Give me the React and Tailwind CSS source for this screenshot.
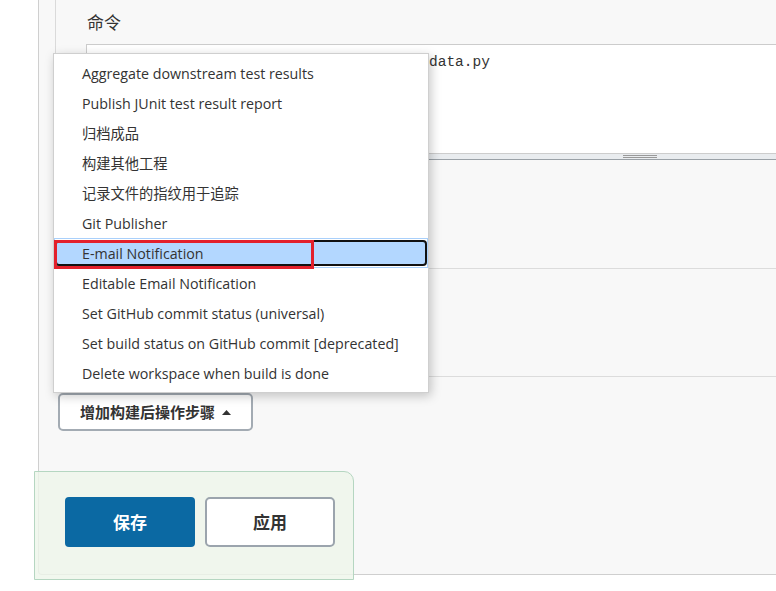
import React from 'react'

const items = [
  'Aggregate downstream test results',
  'Publish JUnit test result report',
  '归档成品',
  '构建其他工程',
  '记录文件的指纹用于追踪',
  'Git Publisher',
  'E-mail Notification',
  'Editable Email Notification',
  'Set GitHub commit status (universal)',
  'Set build status on GitHub commit [deprecated]',
  'Delete workspace when build is done',
]

const App = () => {
  return (
    <div className="relative w-[776px] h-[591px] overflow-hidden bg-white text-[#333] font-['Open_Sans','Noto_Sans_CJK_SC',sans-serif]">
      {/* config panel */}
      <div className="ml-[38px] w-[760px] h-[575px] bg-[#f8f8f8] border-l border-b border-[#cfcfcf] rounded-bl-[4px]">
        <div className="ml-[16px] h-[200px] border-l border-[#dadada] pl-[30px] pt-[10px]">
          <div className="pl-[1px] text-[17px] leading-[24px] font-['Noto_Sans_CJK_SC',sans-serif]">命令</div>
          <div className="mt-[10px] w-[700px] bg-white border-t border-x border-[#ccc]">
            {/* the start of the command sits under the open menu */}
            <div className="h-[108px] pl-[342px] pt-[7px] font-['Liberation_Mono',monospace] text-[14.5px] leading-[20px] text-[#333] whitespace-pre">
              data.py
            </div>
            <div className="h-px bg-[#cdcdcd]" />
            <div className="h-[5px] bg-[#e9ecef] pl-[536px] flex flex-col justify-center gap-[1px]">
              <div className="w-[34px] h-px bg-[#999]" />
              <div className="w-[34px] h-px bg-[#999]" />
            </div>
            <div className="h-px bg-[#9aa1a7]" />
          </div>
        </div>
        <div className="ml-[16px] h-[69px] border-b border-[#dcdcdc]" />
        <div className="ml-[16px] h-[108px] border-b border-[#dcdcdc]" />
        <button className="mt-[16px] ml-[19px] w-[195px] h-[38px] bg-white border-2 border-[#a3abb3] rounded-[5px] flex items-center pl-[20px] text-[15px] font-bold text-[#333] font-['Noto_Sans_CJK_SC',sans-serif]">
          增加构建后操作步骤
          <svg width="9" height="5" viewBox="0 0 9 5" className="ml-[7px]">
            <path d="M0 5 L4.5 0 L9 5 Z" fill="#333" />
          </svg>
        </button>
      </div>

      {/* sticky footer */}
      <div className="absolute left-[34px] top-[471px] w-[320px] h-[109px] bg-[#eef5ea]/80 border border-[#b5d6c1] rounded-tr-[10px] pl-[30px] pt-[25px] flex gap-[10px] font-['Noto_Sans_CJK_SC',sans-serif]">
        <button className="w-[130px] h-[50px] bg-[#0b69a3] rounded-[4px] text-white text-[17px] font-bold">保存</button>
        <button className="w-[130px] h-[50px] bg-white border-2 border-[#9ba4ad] rounded-[5px] text-[#333] text-[17px] font-bold">应用</button>
      </div>

      {/* dropdown menu */}
      <div className="absolute left-[53px] top-[53px] w-[376px] h-[340px] bg-white border border-[#cfcfcf] py-[4px] shadow-[2px_3px_10px_rgba(0,0,0,0.22)]">
        {items.map((t, i) => {
          const active = t === 'E-mail Notification'
          return (
            <div key={i} className="relative h-[30px] flex items-center pl-[28px] pt-[2px] text-[14.25px] text-[#333]">
              {active && (
                <>
                  <div className="absolute inset-0 border border-[#a9d0fb]" />
                  <div className="absolute left-[1px] right-[1px] top-[2px] bottom-[2px] bg-[#b3d7ff] border-2 border-[#111] rounded-[4px]" />
                  <div className="absolute left-0 top-[2px] w-[260px] h-[29px] border-[3px] border-[#e3202b]" />
                </>
              )}
              <span className="relative">{t}</span>
            </div>
          )
        })}
      </div>
    </div>
  )
}

export default App
